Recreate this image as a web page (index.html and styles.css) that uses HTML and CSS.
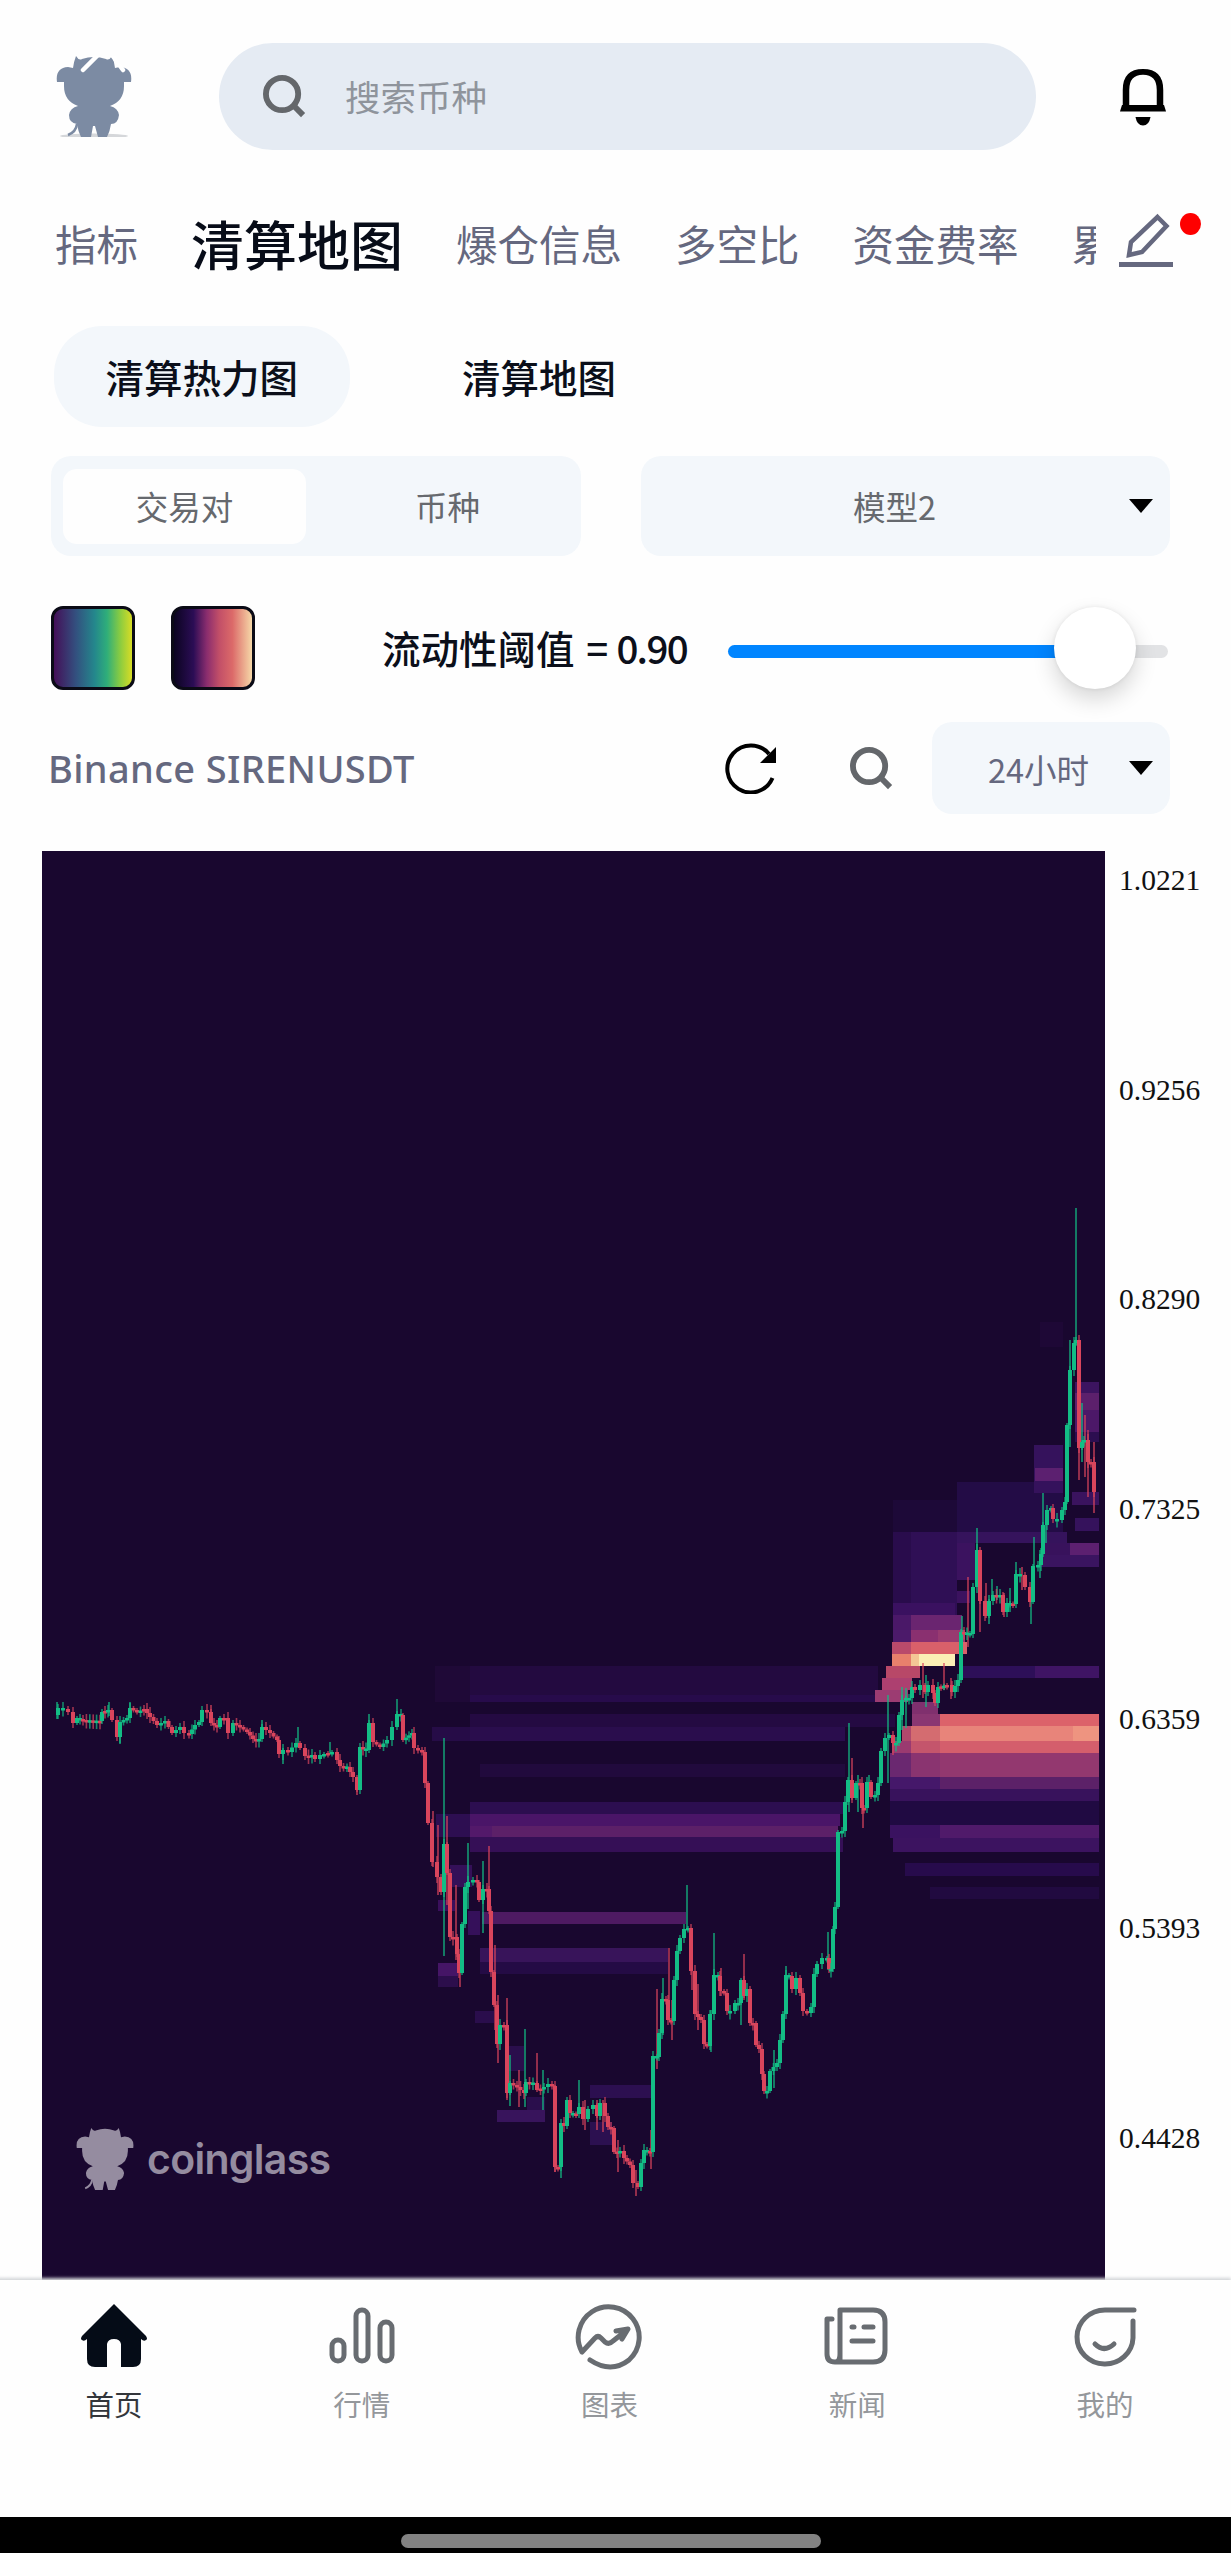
FILE: index.html
```
<!DOCTYPE html>
<html lang="zh-CN">
  <head>
    <title>清算地图</title>
    <meta charset="utf-8" />
    <meta name="viewport" content="width=device-width, initial-scale=1" />
    <link rel="stylesheet" href="styles.css">
  </head>
  <body>
    <!-- shared icons -->
    <svg class="defs" width="0" height="0">
      <symbol id="bull" viewBox="0 0 76 81">
        <path d="M8 26H1Q-1 12 12 11L17 12Q18 5 20 0Q23 5 26 3Q38 -1 50 3Q53 5 56 0Q58 5 59 12L64 11Q77 12 75 26H68V30Q68 45 54 50Q62 52 63 59Q62 68 55 68Q54 75 51 81H42L39 70H37L35 81H25Q22 75 21 68Q13 67 13 59Q14 52 22 50Q8 45 8 30Z" />
        <path d="M21 68Q20 76 12 79" fill="none" stroke="currentColor" stroke-width="2.5" />
      </symbol>
      <symbol id="search" viewBox="0 0 44 44">
        <circle cx="19.5" cy="19.5" r="16.5" fill="none" stroke="currentColor" stroke-width="6" />
        <path d="M31 31L41 41" stroke="currentColor" stroke-width="6" />
      </symbol>
    </svg>

    <header class="header">
      <svg class="logo" viewBox="0 0 76 81">
        <ellipse class="logo-shadow" cx="38" cy="80" rx="34" ry="2.5" />
        <use href="#bull" width="76" height="81" />
        <path class="logo-cut" d="M42 -1L27 14M56 -1L67 14" />
      </svg>
      <div class="searchbox">
        <svg class="icon-search"><use href="#search" /></svg>
        <span>搜索币种</span>
      </div>
      <svg class="bell" viewBox="0 0 46 58">
        <path d="M6 49V25Q6 4.500 23 4.500Q40 4.500 40 25V49" transform="scale(1 .88)" fill="none" stroke="#000" stroke-width="6.500" />
        <path d="M2 37H44L46 43.500H0Z" />
        <path d="M15.500 49H30.500Q29 57.500 23 57.500Q17 57.500 15.500 49Z" />
      </svg>
    </header>

    <nav class="tabs">
      <div class="tab-list">
        <span>指标</span>
        <span class="active">清算地图</span>
        <span>爆仓信息</span>
        <span>多空比</span>
        <span>资金费率</span>
        <span>累</span>
      </div>
      <div class="edit">
        <svg viewBox="0 0 54 56" width="54" height="56">
          <path d="M38.500 4L47.500 13L23 39L10 42L12 29Z" fill="none" stroke="#65687f" stroke-width="4.500" />
          <path d="M0 51.500H54" stroke="#65687f" stroke-width="5" />
        </svg>
        <i class="dot"></i>
      </div>
    </nav>

    <div class="subtabs">
      <span class="active">清算热力图</span>
      <span>清算地图</span>
    </div>

    <div class="controls">
      <div class="segment">
        <span class="active">交易对</span>
        <span>币种</span>
      </div>
      <div class="select">
        <span>模型2</span>
        <i class="caret"></i>
      </div>
    </div>

    <div class="threshold">
      <i class="swatch viridis"></i>
      <i class="swatch magma"></i>
      <label>流动性阈值 <b>= 0.90</b></label>
      <div class="slider">
        <div class="fill"></div>
        <div class="thumb"></div>
      </div>
    </div>

    <div class="pair">
      <span class="pair-name">Binance SIRENUSDT</span>
      <svg class="refresh" viewBox="0 0 53 52">
        <path d="M48.500 36A23.500 23.500 0 1 1 45 12" fill="none" stroke="#000" stroke-width="4" />
        <path d="M52 5V21H36Z" />
      </svg>
      <svg class="icon-search"><use href="#search" /></svg>
      <div class="select small">
        <span>24小时</span>
        <i class="caret"></i>
      </div>
    </div>

    <div class="chart">
      <div class="plot">
        <svg id="heatmap" viewBox="42 851 1063 1429" width="1063" height="1429"></svg>
        <div class="watermark">
          <svg width="58" height="64"><use href="#bull" /></svg>
          <span>coinglass</span>
        </div>
      </div>
      <div class="axis">
        <span>1.0221</span>
        <span>0.9256</span>
        <span>0.8290</span>
        <span>0.7325</span>
        <span>0.6359</span>
        <span>0.5393</span>
        <span>0.4428</span>
      </div>
    </div>

    <footer class="bottom-nav">
      <div class="item active">
        <svg viewBox="0 0 68 68">
          <path d="M34 0L66 32Q68 35 66 36Q64 38 61 35V55Q61 63 53 63H41V40Q40 35 34 35Q28 35 27 40V63H15Q7 63 7 55V35Q4 38 2 36Q0 35 2 32Z" />
        </svg>
        <span>首页</span>
      </div>
      <div class="item">
        <svg viewBox="0 0 68 68" class="line">
          <rect x="4" y="36" width="12" height="21" rx="6" />
          <rect x="28" y="6" width="12" height="51" rx="6" />
          <rect x="52" y="18" width="12" height="39" rx="6" />
        </svg>
        <span>行情</span>
      </div>
      <div class="item">
        <svg viewBox="0 0 68 68" class="line">
          <path d="M7 48A30.500 30.500 0 1 1 54 56Q36 70 15 56M7 48L20 34Q23 31 26 34L30 38Q34 41 38 37L52 26M41 27L53 25L47 35" />
        </svg>
        <span>图表</span>
      </div>
      <div class="item">
        <svg viewBox="0 0 68 68" class="line">
          <path d="M17 58V6H50Q62 6 62 18V46Q62 58 50 58H12Q4 58 4 50V15H9M17 50Q17 58 12 58M29 23H31M41 23H50M29 37H50" />
        </svg>
        <span>新闻</span>
      </div>
      <div class="item">
        <svg viewBox="0 0 68 68" class="line">
          <path d="M63 6H34A28 27 0 1 0 62 34V17M24 40Q33 49 43 40" />
        </svg>
        <span>我的</span>
      </div>
    </footer>
    <div class="system-bar"><i></i></div>

    <script src="chart.js"></script>
  </body>
</html>
```
FILE: styles.css
```
body {
  margin: 0;
  background: #fefefe;
  color: #0b0f1a;
  font-family: "Noto Sans CJK SC", sans-serif;
  width: 1231px;
  height: 2553px;
  overflow: hidden;
}

.defs {
  position: absolute;
}

.header {
  display: flex;
  align-items: center;
  margin-top: 43px;
  height: 107px;
  padding: 0 65px 0 56px;
}

.logo {
  width: 76px;
  height: 81px;
  fill: #7c8ba3;
  color: #7c8ba3;
  margin-right: 87px;
}

.logo-shadow {
  fill: #d5d7da;
}

.logo-cut {
  stroke: white;
  stroke-width: 4.5;
  stroke-linecap: round;
}

.searchbox {
  flex: 1;
  display: flex;
  align-items: center;
  gap: 39px;
  height: 107px;
  box-sizing: border-box;
  padding-left: 44px;
  border-radius: 54px;
  background: #e5ebf3;
  color: #8f949c;
  font-size: 35.5px;
}

.searchbox span {
  margin-top: -3px;
}

.icon-search {
  width: 43px;
  height: 43px;
  color: #64676b;
}

.bell {
  width: 46px;
  height: 58px;
  margin-left: 84px;
}

.tabs {
  display: flex;
  align-items: center;
  margin-top: 64px;
  height: 60px;
  padding-left: 55px;
}

.tab-list {
  display: flex;
  align-items: center;
  gap: 53px;
  width: 1041px;
  margin-top: -3px;
  overflow: hidden;
  white-space: nowrap;
  font-size: 41.5px;
  line-height: 84px;
  color: #65687f;
}

.tab-list span {
  flex: none;
}

.tab-list .active {
  font-size: 53px;
  font-weight: 500;
  color: #070c18;
}

.edit {
  position: relative;
  margin-left: 23px;
  height: 62px;
}

.dot {
  position: absolute;
  left: 61px;
  top: 0;
  width: 21px;
  height: 22px;
  border-radius: 50%;
  background: #fe0000;
}

.subtabs {
  display: flex;
  margin-top: 52px;
  padding-left: 54px;
  gap: 61px;
  font-size: 38.5px;
  font-weight: 500;
  line-height: 101px;
}

.subtabs span {
  padding: 0 51.5px;
  border-radius: 48px;
}

.subtabs .active {
  background: #f3f7fb;
}

.controls {
  display: flex;
  gap: 60px;
  margin-top: 29px;
  padding: 0 61px 0 51px;
  font-size: 32.5px;
  color: #66696e;
}

.segment,
.select {
  width: 530px;
  display: flex;
  align-items: center;
  height: 100px;
  box-sizing: border-box;
  border-radius: 20px;
  background: #f3f7fb;
}

.segment {
  padding: 0 12px;
  text-align: center;
}

.segment span {
  width: 243px;
  line-height: 73px;
  padding-bottom: 2px;
  border-radius: 14px;
}

.segment span + span {
  margin-left: 20px;
}

.segment .active {
  background: #fefefe;
}

.select {
  justify-content: flex-end;
  padding-right: 17px;
}

.select span {
  margin: -2px 193px 0 0;
}

.caret {
  border: 12px solid transparent;
  border-top: 14px solid #000;
  border-bottom: 0;
}

.threshold {
  display: flex;
  align-items: center;
  margin-top: 50px;
  height: 84px;
  padding-left: 51px;
}

.swatch {
  width: 84px;
  height: 84px;
  box-sizing: border-box;
  border: 3px solid #0b0b16;
  border-radius: 12px;
  margin-right: 36px;
}

.viridis {
  background: linear-gradient(90deg, #440f58, #33507f 28%, #24878c 52%, #2fae7a 68%, #8bcc40 85%, #d8dc25);
}

.magma {
  background: linear-gradient(90deg, #0b0420, #2b0d55 25%, #8a2d6e 42%, #c24f68 58%, #dc6a69 75%, #f6d8a8);
}

.threshold label {
  width: 346px;
  margin: -2px 0 0 91px;
  font-size: 38.5px;
  font-weight: 500;
  white-space: nowrap;
}

.threshold b {
  font-weight: 500;
  letter-spacing: -1.7px;
  word-spacing: 3px;
  margin-left: 3px;
}

.slider {
  position: relative;
  width: 440px;
  height: 13px;
  margin-top: 6px;
  border-radius: 7px;
  background: #e2e3e5;
}

.fill {
  width: 90%;
  height: 13px;
  border-radius: 7px 0 0 7px;
  background: #0085ff;
}

.thumb {
  position: absolute;
  left: 326px;
  top: -38px;
  width: 82px;
  height: 82px;
  border-radius: 50%;
  background: #fff;
  box-shadow: 0 10px 22px rgba(0, 0, 0, 0.16), 0 0 4px rgba(0, 0, 0, 0.08);
}

.pair {
  display: flex;
  align-items: center;
  margin-top: 32px;
  padding: 0 61px 0 48px;
  height: 92px;
  font-size: 32.5px;
  color: #65687f;
}

.pair-name {
  width: 676px;
  font-family: "Noto Sans", sans-serif;
  font-size: 38px;
  font-weight: 500;
  letter-spacing: 0.35px;
}

.refresh {
  width: 53px;
  height: 52px;
  margin-right: 73px;
}

.select.small {
  width: 238px;
  height: 92px;
  margin-left: 39px;
}

.select.small span {
  margin: 0 40px 0 0;
}

.chart {
  display: flex;
  margin-top: 37px;
  height: 1429px;
  padding-left: 42px;
}

.plot {
  position: relative;
  width: 1063px;
  background: #19072f;
}

#heatmap {
  display: block;
}

.watermark {
  position: absolute;
  left: 34px;
  top: 1276px;
  display: flex;
  align-items: center;
  gap: 13px;
  color: #958ca0;
  fill: #958ca0;
  font-family: Inter, sans-serif;
  font-size: 41px;
  font-weight: 600;
  letter-spacing: -0.7px;
  line-height: 62px;
}

.axis {
  display: flex;
  flex-direction: column;
  justify-content: space-between;
  box-sizing: border-box;
  padding: 14px 0 127px 14px;
  font-family: "Liberation Serif", serif;
  font-size: 29.5px;
  line-height: 30px;
  color: #111;
}

.bottom-nav {
  position: relative;
  display: flex;
  height: 237px;
  box-sizing: border-box;
  padding: 24px 2px 0 0;
  margin-left: -10px;
  background: #fefefe;
  box-shadow: 0 -2px 3px #d3d5d8;
}

.item {
  flex: 1;
  text-align: center;
  font-size: 28.5px;
  line-height: 42px;
  color: #94979b;
}

.item svg {
  display: block;
  width: 68px;
  height: 68px;
  margin: 0 auto 11px;
}

.item.active {
  color: #33363b;
  fill: #050c17;
}

.line {
  fill: none;
  stroke: #686c71;
  stroke-width: 5;
  stroke-linecap: round;
  stroke-linejoin: round;
}

.system-bar {
  position: relative;
  height: 36px;
  background: #000;
}

.system-bar i {
  display: block;
  width: 420px;
  height: 14px;
  margin-left: 401px;
  border-radius: 7px;
  background: #828282;
  transform: translateY(17px);
}
```
FILE: chart.js
```
var svg = document.getElementById("heatmap");

// liquidation levels: x1, x2, y1, y2, color
var levels = [
  [435, 470, 1666, 1702, "#1f0937"], [470, 878, 1666, 1695, "#230a40"],
  [470, 878, 1695, 1702, "#270b4b"], [470, 895, 1714, 1727, "#240a42"],
  [432, 470, 1727, 1741, "#260c47"], [470, 845, 1727, 1741, "#2a0d4d"],
  [480, 845, 1764, 1777, "#210a3d"], [470, 845, 1802, 1814, "#2c0e50"],
  [436, 470, 1814, 1837, "#2d0e51"], [470, 840, 1814, 1826, "#4a1568"],
  [470, 492, 1826, 1837, "#53196a"], [492, 838, 1826, 1837, "#5c2068"],
  [470, 843, 1837, 1852, "#350f56"], [482, 686, 1912, 1924, "#4e1a62"],
  [480, 668, 1948, 1962, "#38145a"], [480, 668, 1962, 1974, "#240b45"],
  [590, 652, 2085, 2098, "#2c0f50"], [497, 545, 2110, 2122, "#38145c"],
  [527, 545, 2097, 2110, "#2a0e4c"], [590, 612, 2122, 2145, "#2c1050"],
  [438, 458, 1963, 1976, "#451566"], [438, 458, 1976, 1987, "#2c0e4c"],
  [475, 494, 2011, 2023, "#2a0d4c"], [450, 472, 1865, 1887, "#341058"],
  [438, 455, 1900, 1911, "#3a0f5c"], [468, 480, 1911, 1935, "#35105a"],
  [508, 524, 2046, 2071, "#2a0e4c"],
  // breakout zone
  [893, 957, 1500, 1532, "#1d0938"], [957, 1063, 1482, 1532, "#230c46"],
  [893, 911, 1532, 1615, "#290c4c"], [911, 957, 1532, 1615, "#2f0f55"],
  [957, 1067, 1532, 1543, "#35135c"], [957, 975, 1543, 1580, "#3b125f"],
  [957, 970, 1591, 1603, "#3b125f"], [893, 955, 1603, 1615, "#3a1160"],
  [893, 911, 1615, 1630, "#4a1868"], [911, 962, 1615, 1630, "#6a2570"],
  [893, 911, 1630, 1642, "#4c1a6a"], [911, 938, 1630, 1642, "#8a3070"],
  [938, 965, 1630, 1642, "#983a70"], [892, 911, 1642, 1654, "#b94a6b"],
  [911, 967, 1642, 1654, "#d9606a"], [892, 911, 1654, 1666, "#e8806c"],
  [911, 919, 1654, 1666, "#f4c795"], [919, 955, 1654, 1666, "#fbefb5"],
  [886, 920, 1666, 1678, "#b84868"], [882, 912, 1678, 1690, "#ad4070"],
  [875, 908, 1690, 1702, "#9c3c72"], [912, 938, 1702, 1714, "#80306e"],
  [912, 940, 1714, 1726, "#8a3672"], [940, 1099, 1714, 1726, "#dc626a"],
  [902, 911, 1726, 1741, "#b0486c"], [911, 940, 1726, 1741, "#d46c70"],
  [940, 1073, 1726, 1741, "#e8847a"], [1073, 1099, 1726, 1741, "#ee9480"],
  [892, 911, 1741, 1753, "#9a3a70"], [911, 940, 1741, 1753, "#c4556c"],
  [940, 1099, 1741, 1753, "#d45e6c"], [890, 911, 1753, 1777, "#6a2870"],
  [911, 940, 1753, 1777, "#8a3470"], [940, 1099, 1753, 1777, "#93386f"],
  [890, 940, 1777, 1789, "#45186a"], [940, 1099, 1777, 1789, "#5c2168"],
  [890, 1099, 1789, 1801, "#38125c"], [890, 1099, 1801, 1825, "#200a42"],
  [890, 940, 1825, 1838, "#3a1260"], [940, 1099, 1825, 1838, "#501a6a"],
  [893, 1099, 1838, 1852, "#3c1360"], [905, 1099, 1863, 1876, "#270b4c"],
  [930, 1099, 1887, 1899, "#210a40"], [962, 1035, 1666, 1678, "#2d0f58"],
  [1035, 1099, 1666, 1678, "#3f1464"], [1034, 1063, 1445, 1493, "#35125c"],
  [1035, 1063, 1468, 1481, "#5c2070"], [1040, 1063, 1322, 1347, "#1e0836"],
  [1075, 1099, 1382, 1393, "#3c1460"], [1075, 1099, 1393, 1410, "#5c206c"],
  [1075, 1099, 1410, 1432, "#4c1868"], [1075, 1099, 1432, 1442, "#2c0e50"],
  [1072, 1099, 1492, 1505, "#3a135e"], [1075, 1099, 1518, 1531, "#35125c"],
  [1043, 1070, 1543, 1555, "#38125c"], [1070, 1099, 1543, 1555, "#5c2070"],
  [1040, 1099, 1555, 1567, "#3a1460"]
];

// price line, one "x,y" per turn
var price = (
  "55,1715 58,1708 63,1709 68,1712 73,1723 77,1718 83,1720 100,1721 102,1712 108,1710 112,1720 117,1737 " +
  "120,1722 127,1718 130,1708 137,1712 144,1709 150,1717 157,1725 165,1721 172,1733 180,1727 184,1733 " +
  "189,1734 195,1725 199,1722 202,1710 207,1712 211,1723 217,1727 220,1718 224,1718 228,1733 233,1723 " +
  "240,1727 247,1732 253,1739 259,1739 262,1727 270,1733 277,1740 279,1754 283,1750 288,1752 296,1743 " +
  "300,1748 305,1756 312,1755 315,1759 320,1755 332,1752 337,1760 340,1766 347,1767 353,1777 357,1790 " +
  "360,1747 366,1750 369,1723 373,1742 380,1747 387,1740 392,1727 397,1714 401,1715 403,1740 412,1733 " +
  "414,1748 422,1752 425,1783 428,1823 432,1862 437,1877 441,1892 444,1844 447,1873 450,1937 453,1937 " +
  "457,1954 459,1973 462,1924 465,1887 468,1882 473,1880 477,1882 479,1900 483,1889 487,1889 489,1911 " +
  "491,1972 494,2005 497,2044 500,2025 504,2025 507,2093 510,2083 517,2087 524,2093 526,2082 533,2083 " +
  "537,2090 544,2087 548,2084 552,2086 555,2167 558,2167 561,2123 564,2126 567,2100 570,2113 576,2114 " +
  "579,2107 583,2119 588,2109 593,2105 597,2116 600,2103 605,2116 608,2127 611,2128 614,2152 620,2151 " +
  "624,2158 630,2165 633,2183 638,2187 641,2163 644,2150 650,2152 653,2056 657,2057 659,2033 662,1999 " +
  "666,2000 668,2020 671,2021 674,1980 677,1951 680,1938 684,1929 688,1928 691,1971 695,2014 701,2020 " +
  "704,2044 707,2046 710,2014 714,1975 718,1976 720,1991 724,1993 727,2011 730,2011 735,2003 738,2003 " +
  "741,1980 744,1996 747,1989 750,2023 753,2023 756,2045 759,2049 762,2074 764,2091 767,2091 770,2071 " +
  "777,2063 780,2040 783,2014 786,1975 789,1976 792,1989 796,1978 800,1993 803,2011 807,2013 811,2007 " +
  "814,1974 817,1964 822,1958 827,1958 829,1969 831,1969 833,1929 835,1907 838,1832 842,1831 845,1802 " +
  "848,1780 852,1798 856,1783 860,1783 862,1808 864,1808 867,1782 871,1797 875,1795 878,1783 881,1751 " +
  "885,1738 889,1735 893,1743 896,1743 899,1715 902,1700 906,1698 909,1698 912,1687 915,1690 920,1685 " +
  "925,1692 928,1685 933,1693 935,1703 938,1687 947,1685 952,1692 958,1680 961,1632 967,1633 970,1634 " +
  "973,1587 977,1550 980,1601 985,1616 989,1601 993,1595 1000,1595 1003,1612 1007,1603 1013,1604 " +
  "1016,1574 1020,1575 1025,1587 1030,1602 1033,1566 1038,1565 1041,1554 1043,1525 1047,1510 1051,1508 " +
  "1053,1519 1057,1520 1062,1510 1065,1502 1067,1425 1070,1370 1074,1343 1076,1340 1079,1448 1082,1442 " +
  "1084,1440 1088,1462 1091,1462 1094,1492"
).split(" ").map(function (p) {
  return p.split(",").map(Number);
});

// long wicks: x, high, low, up
var wicks = [
  [57, 1702, 1719, 1], [109, 1702, 1716, 1], [120, 1722, 1744, 1], [130, 1702, 1715, 1],
  [211, 1705, 1722, 0], [262, 1720, 1733, 1], [283, 1748, 1764, 1], [298, 1727, 1746, 1],
  [330, 1742, 1753, 1], [357, 1780, 1795, 0], [369, 1714, 1735, 1], [397, 1699, 1724, 1],
  [433, 1811, 1867, 0], [438, 1825, 1895, 0], [444, 1738, 1956, 1], [447, 1816, 1905, 0],
  [456, 1885, 1960, 0], [460, 1960, 1987, 0], [468, 1843, 1909, 1], [483, 1861, 1933, 1],
  [489, 1846, 1905, 0], [495, 1945, 2030, 0], [498, 1995, 2063, 0], [507, 1998, 2100, 0],
  [510, 2055, 2106, 1], [519, 2070, 2107, 0], [525, 2029, 2107, 1], [537, 2053, 2090, 0],
  [543, 2070, 2110, 1], [555, 2085, 2172, 0], [561, 2123, 2178, 1], [579, 2080, 2113, 1],
  [585, 2100, 2130, 0], [597, 2100, 2130, 0], [603, 2100, 2132, 0], [618, 2140, 2172, 0],
  [636, 2170, 2196, 0], [651, 2130, 2169, 0], [657, 1989, 2069, 0], [663, 1978, 2035, 1],
  [669, 1948, 2020, 0], [672, 2000, 2040, 0], [687, 1885, 1930, 1], [692, 1948, 1990, 0],
  [698, 1984, 2030, 0], [711, 2010, 2052, 1], [714, 1933, 1990, 1], [721, 1968, 1996, 0],
  [741, 1980, 2025, 1], [744, 1954, 1998, 0], [774, 2050, 2088, 1], [786, 1966, 1985, 1],
  [828, 1932, 1970, 1], [849, 1723, 1812, 1], [852, 1758, 1800, 0], [858, 1775, 1812, 1],
  [863, 1785, 1828, 0], [869, 1775, 1790, 1], [888, 1695, 1783, 1], [893, 1735, 1755, 0],
  [902, 1687, 1730, 1], [906, 1688, 1728, 1], [923, 1663, 1698, 0], [926, 1675, 1707, 1],
  [944, 1663, 1690, 0], [951, 1678, 1699, 0], [962, 1616, 1680, 1], [968, 1577, 1647, 0],
  [977, 1528, 1560, 1], [980, 1570, 1632, 0], [986, 1583, 1618, 0], [989, 1595, 1624, 1],
  [992, 1579, 1600, 1], [997, 1586, 1600, 1], [1004, 1593, 1617, 0], [1010, 1588, 1612, 1],
  [1016, 1562, 1580, 1], [1022, 1567, 1590, 0], [1031, 1590, 1624, 1], [1034, 1537, 1570, 1],
  [1040, 1550, 1578, 1], [1043, 1493, 1530, 1], [1046, 1515, 1543, 1], [1070, 1340, 1447, 1],
  [1076, 1208, 1345, 1], [1079, 1440, 1480, 0], [1082, 1403, 1462, 1], [1085, 1415, 1477, 0],
  [1088, 1430, 1497, 0], [1094, 1442, 1513, 0]
];

var UP = "#13bd85";
var DOWN = "#d9455c";

function rect(x, y, w, h, color, opacity) {
  var r = document.createElementNS("http://www.w3.org/2000/svg", "rect");
  r.setAttribute("x", x);
  r.setAttribute("y", y);
  r.setAttribute("width", w);
  r.setAttribute("height", h);
  r.setAttribute("fill", color);
  if (opacity) r.setAttribute("fill-opacity", opacity);
  svg.appendChild(r);
}

levels.forEach(function (l) {
  rect(l[0], l[2], l[1] - l[0], l[3] - l[2], l[4]);
});

wicks.forEach(function (w) {
  rect(w[0] - 0.9, w[1], 1.8, w[2] - w[1], w[3] ? UP : DOWN, 0.7);
});

// candle bodies, long moves sideways are split into small candles
for (var i = 1; i < price.length; i++) {
  var a = price[i - 1];
  var b = price[i];
  var n = Math.max(1, Math.round((b[0] - a[0]) / 3.6));
  for (var k = 0; k < n; k++) {
    var x = a[0] + ((b[0] - a[0]) * (k + 1)) / n;
    var y1 = a[1] + ((b[1] - a[1]) * k) / n;
    var y2 = a[1] + ((b[1] - a[1]) * (k + 1)) / n;
    var flat = Math.abs(y2 - y1) < 2;
    var up = flat ? (i + k) % 2 == 0 : y2 < y1;
    var color = up ? UP : DOWN;
    var bodyY = Math.min(y1, y2);
    var bodyH = Math.max(Math.abs(y2 - y1), 2.5);
    var tail = 2 + ((i * 7 + k * 5) % 5);
    rect(x - 0.8, bodyY - tail, 1.6, bodyH + tail * 2, color, 0.7);
    rect(x - 2, bodyY, 4, bodyH, color);
  }
}
```
